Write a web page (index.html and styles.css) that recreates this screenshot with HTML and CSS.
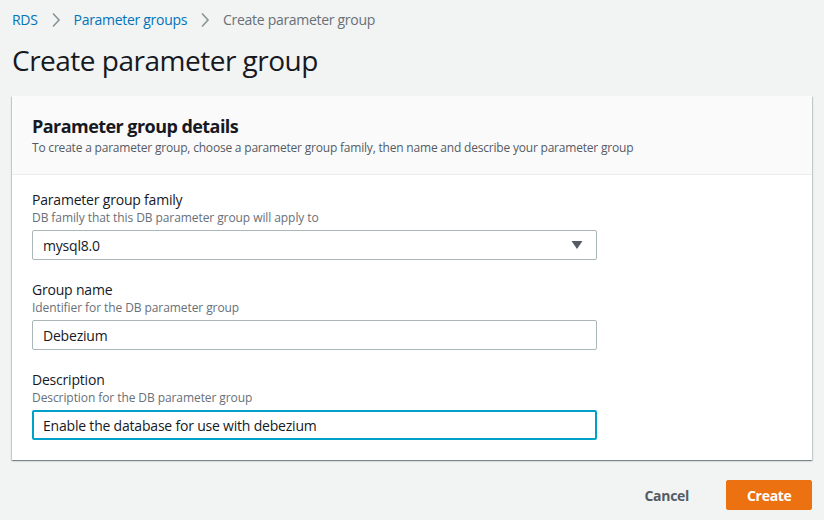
FILE: index.html
```html
<!DOCTYPE html>
<html>
<head>
<meta charset="utf-8">
<link rel="stylesheet" href="styles.css">
</head>
<body>
<div class="page">
  <nav class="crumbs">
    <a class="crumb-link">RDS</a>
    <svg class="chev" width="10" height="16" viewBox="0 0 10 16"><path d="M2 1.5 L8 8 L2 14.5" fill="none" stroke="#879596" stroke-width="1.6"/></svg>
    <a class="crumb-link">Parameter groups</a>
    <svg class="chev" width="10" height="16" viewBox="0 0 10 16"><path d="M2 1.5 L8 8 L2 14.5" fill="none" stroke="#879596" stroke-width="1.6"/></svg>
    <span class="crumb-current">Create parameter group</span>
  </nav>
  <h1 class="title">Create parameter group</h1>
  <section class="card">
    <header class="card-head">
      <h2 class="card-title">Parameter group details</h2>
      <p class="card-sub">To create a parameter group, choose a parameter group family, then name and describe your parameter group</p>
    </header>
    <div class="card-body">
      <div class="field">
        <div class="label">Parameter group family</div>
        <div class="desc">DB family that this DB parameter group will apply to</div>
        <div class="input select">
          <span>mysql8.0</span>
          <svg width="12" height="10" viewBox="0 0 12 10"><path d="M0.5 1 L11.5 1 L6 9 Z" fill="#545b64"/></svg>
        </div>
      </div>
      <div class="field">
        <div class="label">Group name</div>
        <div class="desc">Identifier for the DB parameter group</div>
        <div class="input"><span>Debezium</span></div>
      </div>
      <div class="field">
        <div class="label">Description</div>
        <div class="desc">Description for the DB parameter group</div>
        <div class="input focus"><span>Enable the database for use with debezium</span></div>
      </div>
    </div>
  </section>
  <div class="actions">
    <button class="btn-cancel">Cancel</button>
    <button class="btn-create">Create</button>
  </div>
</div>
</body>
</html>
```
FILE: styles.css
```css
* { box-sizing: border-box; }
html, body { margin: 0; padding: 0; background: #f2f3f3; }
body {
  font-family: "Open Sans", "Noto Sans", Arial, sans-serif;
  color: #16191f;
  width: 824px;
  height: 520px;
  overflow: hidden;
}
.page { padding: 11px 12px 0 12px; }
.crumbs {
  display: flex;
  align-items: center;
  height: 18px;
  font-size: 14px;
  line-height: 18px;
  letter-spacing: -0.3px;
}
.crumb-link { color: #0073bb; }
.crumb-current { color: #687078; }
.chev { margin: 0 13px 0 13px; }
.title {
  margin: 13px 0 0 0;
  font-size: 28px;
  line-height: 36px;
  font-weight: 400;
  color: #16191f;
  letter-spacing: -0.5px;
}
.card {
  margin-top: 18px;
  background: #fff;
  box-shadow: 0 1px 1px 0 rgba(0,28,36,0.3), 1px 1px 1px 0 rgba(0,28,36,0.15), -1px 1px 1px 0 rgba(0,28,36,0.15);
}
.card-head {
  background: #fafafa;
  border-bottom: 1px solid #eaeded;
  padding: 19px 20px 18px 20px;
}
.card-title {
  margin: 0;
  font-size: 18px;
  line-height: 22px;
  font-weight: 700;
  letter-spacing: -0.55px;
}
.card-sub {
  margin: 3px 0 0 0;
  font-size: 12px;
  line-height: 16px;
  color: #545b64;
  letter-spacing: -0.2px;
}
.card-body {
  padding: 15px 20px 20px 20px;
  display: flex;
  flex-direction: column;
  gap: 20px;
}
.label { font-size: 14px; line-height: 20px; letter-spacing: -0.2px; }
.desc { font-size: 12px; line-height: 16px; color: #687078; letter-spacing: -0.08px; }
.input {
  margin-top: 4px;
  width: 565px;
  height: 30px;
  border: 1px solid #aab7b8;
  border-radius: 2px;
  padding: 0 13px 0 10px;
  display: flex;
  align-items: center;
  justify-content: space-between;
  font-size: 14px;
  letter-spacing: -0.2px;
  background: #fff;
}
.input.focus {
  border: 2px solid #00a1c9;
  padding-left: 9px;
}
.actions {
  margin-top: 20px;
  display: flex;
  justify-content: flex-end;
  gap: 16px;
}
button {
  font-family: inherit;
  font-size: 14px;
  font-weight: 700;
  height: 30px;
  border-radius: 2px;
  letter-spacing: -0.3px;
  cursor: pointer;
}
.btn-cancel {
  background: transparent;
  border: 1px solid transparent;
  color: #545b64;
  padding: 0 20px;
}
.btn-create {
  background: #ec7211;
  border: 1px solid #ec7211;
  color: #fff;
  padding: 0 20px;
  width: 86px;
}
```
